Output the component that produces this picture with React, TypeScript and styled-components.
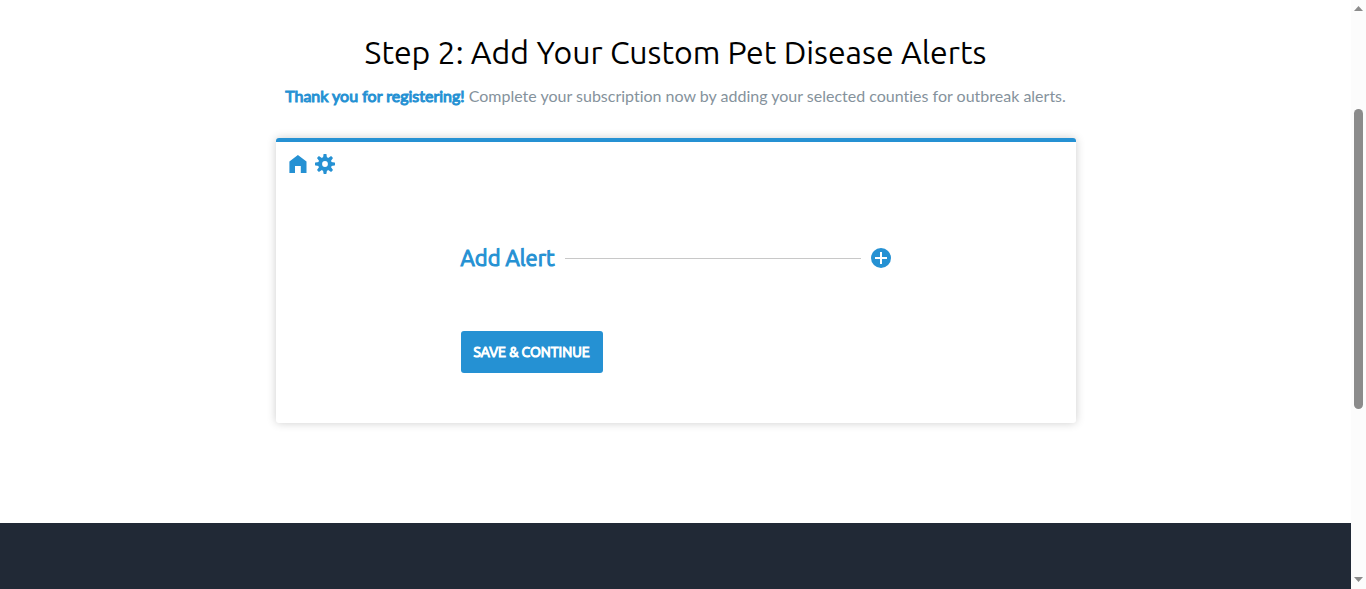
import React from 'react';
import styled, { createGlobalStyle } from 'styled-components';

const blue = '#2591d3';
const headingFont = `Ubuntu, "Noto Sans", sans-serif`;

const GlobalStyle = createGlobalStyle`
  * { box-sizing: border-box; }
  body { margin: 0; background: #fff; font-family: Lato, sans-serif; font-variant-ligatures: none; }
`;

const Shell = styled.div`
  display: grid;
  grid-template-columns: minmax(0, 1fr) 15px;
  height: 100vh;
`;

const Page = styled.div`
  display: flex;
  flex-direction: column;
  min-width: 0;
  overflow: hidden;
`;

const Main = styled.main`
  display: flex;
  flex-direction: column;
  align-items: center;
  padding: 32px 16px 100px;
`;

const Title = styled.h1`
  margin: 0;
  font: 400 32px/40px ${headingFont};
  color: #000;
  text-align: center;
`;

const Intro = styled.p`
  margin: 12px 0 30px;
  font-size: 16px;
  line-height: 24px;
  color: #85929c;
  text-align: center;
`;

const Thanks = styled.strong`
  font-weight: 400;
  -webkit-text-stroke: 1px ${blue};
  color: ${blue};
`;

const Card = styled.section`
  display: flex;
  flex-direction: column;
  width: 100%;
  max-width: 800px;
  padding: 12px 13px 50px;
  border-top: 4px solid ${blue};
  border-radius: 3px;
  background: #fff;
  box-shadow: 0 0 10px rgba(0, 0, 0, 0.2);
`;

const Tools = styled.nav`
  display: flex;
  gap: 8px;
`;

const ToolLink = styled.a`
  display: flex;
  color: ${blue};
`;

const Form = styled.div`
  width: 100%;
  max-width: 430px;
  margin: 68px auto 0;
`;

const AlertRow = styled.div`
  display: flex;
  align-items: center;
  gap: 10px;
`;

const AlertTitle = styled.h2`
  margin: 0;
  font: 400 22px/32px ${headingFont};
  -webkit-text-stroke: 1px ${blue};
  color: ${blue};
`;

const Rule = styled.hr`
  flex: 1;
  height: 1px;
  margin: 0;
  border: 0;
  background: #c8c8c8;
`;

const AddButton = styled.button`
  display: flex;
  padding: 0;
  border: 0;
  background: none;
  color: ${blue};
  cursor: pointer;
`;

const SaveButton = styled.button`
  display: block;
  height: 42px;
  margin-top: 57px;
  padding: 0 13px;
  border: 0;
  border-radius: 3px;
  background: ${blue};
  color: #fff;
  font: 400 14px/20px ${headingFont};
  -webkit-text-stroke: 1px #fff;
  text-transform: uppercase;
  cursor: pointer;
`;

const Footer = styled.footer`
  flex: 1;
  background: #212936;
`;

const Scrollbar = styled.div`
  display: flex;
  flex-direction: column;
  align-items: center;
  padding: 6px 0 7px;
  background: #fcfcfc;
  color: #8b8b8b;
`;

const Track = styled.div`
  display: grid;
  flex: 1;
  grid-template-rows: 98fr 300fr 168fr;
  width: 9px;
`;

const Thumb = styled.div`
  grid-row: 2;
  border-radius: 5px;
  background: #8b8b8b;
`;

const HomeIcon = () => (
  <svg width="18" height="20" viewBox="0 0 18 20" fill="currentColor" aria-hidden="true">
    <path d="M8.9 1 17.5 7.5V19H11.8V12H6V19H.4V7.5Z" />
  </svg>
);

const teeth = [0, 45, 90, 135, 180, 225, 270, 315];

const GearIcon = () => (
  <svg width="20" height="20" viewBox="0 0 20 20" aria-hidden="true">
    <g fill="currentColor">
      {teeth.map((angle) => (
        <path key={angle} d="M8 4 8.5 .4Q8.6 0 9 0H11Q11.4 0 11.5 .4L12 4Z" transform={`rotate(${angle} 10 10)`} />
      ))}
    </g>
    <circle cx="10" cy="10" r="4.9" fill="none" stroke="currentColor" strokeWidth="4" />
  </svg>
);

const PlusIcon = () => (
  <svg width="20" height="20" viewBox="0 0 20 20" aria-hidden="true">
    <circle cx="10" cy="10" r="10" fill="currentColor" />
    <path d="M4 10H16M10 4V16" stroke="#fff" strokeWidth="2" />
  </svg>
);

const Arrow = ({ down = false }: { down?: boolean }) => (
  <svg width="9" height="5" viewBox="0 0 9 5" fill="currentColor">
    <path d={down ? 'M0 0H9L4.5 5Z' : 'M0 5H9L4.5 0Z'} />
  </svg>
);

export default function App() {
  return (
    <>
      <GlobalStyle />
      <Shell>
        <Page>
          <Main>
            <Title>Step 2: Add Your Custom Pet Disease Alerts</Title>
            <Intro>
              <Thanks>Thank you for registering!</Thanks> Complete your subscription now by adding your selected
              counties for outbreak alerts.
            </Intro>
            <Card>
              <Tools>
                <ToolLink href="#home" aria-label="Home">
                  <HomeIcon />
                </ToolLink>
                <ToolLink href="#settings" aria-label="Settings">
                  <GearIcon />
                </ToolLink>
              </Tools>
              <Form>
                <AlertRow>
                  <AlertTitle>Add Alert</AlertTitle>
                  <Rule />
                  <AddButton type="button" aria-label="Add alert">
                    <PlusIcon />
                  </AddButton>
                </AlertRow>
                <SaveButton type="button">Save &amp; Continue</SaveButton>
              </Form>
            </Card>
          </Main>
          <Footer />
        </Page>
        <Scrollbar aria-hidden="true">
          <Arrow />
          <Track>
            <Thumb />
          </Track>
          <Arrow down />
        </Scrollbar>
      </Shell>
    </>
  );
}
